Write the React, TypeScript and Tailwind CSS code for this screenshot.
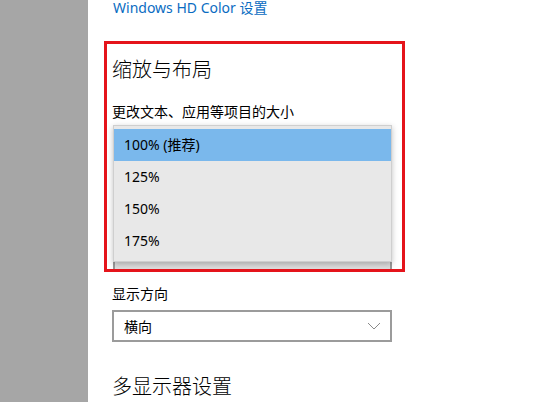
import React from 'react';

const font = { fontFamily: '"Noto Sans", "Noto Sans CJK SC", sans-serif' };

const scales = ['100% (推荐)', '125%', '150%', '175%'];

const App: React.FC = () => {
  return (
    <div className="flex w-[559px] h-[402px] overflow-hidden bg-white text-[#000]" style={font}>
      {/* Left strip */}
      <div className="w-[88px] shrink-0 bg-[#a6a6a6]" />

      <div className="flex flex-col pl-[16px]">
        <div className="pl-[9px] text-[14px] leading-[16px] text-[#0a6cc2]">Windows HD Color 设置</div>

        {/* Highlighted section */}
        <div className="mt-[25px] w-[301px] border-[3px] border-[#e5141b] pl-[5px] pt-[12px]">
          <div className="text-[20px] leading-[28px] font-light">缩放与布局</div>
          <div className="mt-[18px] text-[14px] leading-[20px]">更改文本、应用等项目的大小</div>

          {/* Open dropdown list */}
          <div className="relative z-10 ml-[1px] mt-[3px] w-[279px] border border-[#cfcfcf] bg-[#e8e8e8] pt-[3px] pb-[4px] shadow-[0_2px_6px_rgba(0,0,0,0.25)]">
            {scales.map((s, i) => (
              <div
                key={s}
                className={
                  i === 0
                    ? 'flex h-[32px] items-center bg-[#7ab8ec] pl-[10px] pb-[2px] text-[14px]'
                    : 'flex h-[32px] items-center pl-[10px] pb-[2px] text-[14px]'
                }
              >
                {s}
              </div>
            ))}
          </div>
          <div className="ml-[1px] h-[7px] w-[279px] border-x-2 border-[#9a9a9a] bg-[#dedede]" />
        </div>

        <div className="mt-[12px] pl-[8px] text-[14px] leading-[20px]">显示方向</div>
        <div className="ml-[8px] mt-[6px] flex h-[32px] w-[280px] items-center justify-between border-2 border-[#9b9b9b] pl-[10px] pr-[9px]">
          <span className="text-[14px]">横向</span>
          <svg width="14" height="8" viewBox="0 0 14 8" fill="none">
            <path d="M1 1L7 7L13 1" stroke="#8a8a8a" strokeWidth="1" />
          </svg>
        </div>

        <div className="mt-[31px] pl-[8px] text-[20px] leading-[28px] font-light">多显示器设置</div>
      </div>
    </div>
  );
};

export default App;
